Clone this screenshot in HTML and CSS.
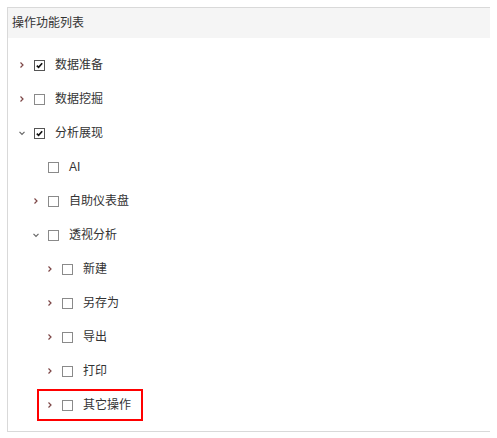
FILE: index.html
```html
<html lang="en">
<head>
    <meta charset="utf-8">
    <link rel="stylesheet" href="styles.css">
</head>
<body>
<div class="panel">
    <div class="panel-head">操作功能列表</div>
    <ul class="tree">
        <li class="row lv0"><span class="node">
            <svg class="arrow" viewBox="0 0 8 8"><path d="M2.5 1.5 L5 4 L2.5 6.5"/></svg>
            <span class="box checked"><svg viewBox="0 0 11 11"><path d="M2.2 5.6 L4.4 7.8 L8.8 2.8"/></svg></span>
            <span class="label">数据准备</span>
        </span></li>
        <li class="row lv0"><span class="node">
            <svg class="arrow" viewBox="0 0 8 8"><path d="M2.5 1.5 L5 4 L2.5 6.5"/></svg>
            <span class="box"></span>
            <span class="label">数据挖掘</span>
        </span></li>
        <li class="row lv0"><span class="node">
            <svg class="arrow open" viewBox="0 0 8 8"><path d="M1.5 2.8 L4 5.3 L6.5 2.8"/></svg>
            <span class="box checked"><svg viewBox="0 0 11 11"><path d="M2.2 5.6 L4.4 7.8 L8.8 2.8"/></svg></span>
            <span class="label">分析展现</span>
        </span></li>
        <li class="row lv1"><span class="node">
            <span class="arrow"></span>
            <span class="box"></span>
            <span class="label">AI</span>
        </span></li>
        <li class="row lv1"><span class="node">
            <svg class="arrow" viewBox="0 0 8 8"><path d="M2.5 1.5 L5 4 L2.5 6.5"/></svg>
            <span class="box"></span>
            <span class="label">自助仪表盘</span>
        </span></li>
        <li class="row lv1"><span class="node">
            <svg class="arrow open" viewBox="0 0 8 8"><path d="M1.5 2.8 L4 5.3 L6.5 2.8"/></svg>
            <span class="box"></span>
            <span class="label">透视分析</span>
        </span></li>
        <li class="row lv2"><span class="node">
            <svg class="arrow" viewBox="0 0 8 8"><path d="M2.5 1.5 L5 4 L2.5 6.5"/></svg>
            <span class="box"></span>
            <span class="label">新建</span>
        </span></li>
        <li class="row lv2"><span class="node">
            <svg class="arrow" viewBox="0 0 8 8"><path d="M2.5 1.5 L5 4 L2.5 6.5"/></svg>
            <span class="box"></span>
            <span class="label">另存为</span>
        </span></li>
        <li class="row lv2"><span class="node">
            <svg class="arrow" viewBox="0 0 8 8"><path d="M2.5 1.5 L5 4 L2.5 6.5"/></svg>
            <span class="box"></span>
            <span class="label">导出</span>
        </span></li>
        <li class="row lv2"><span class="node">
            <svg class="arrow" viewBox="0 0 8 8"><path d="M2.5 1.5 L5 4 L2.5 6.5"/></svg>
            <span class="box"></span>
            <span class="label">打印</span>
        </span></li>
        <li class="row lv2"><span class="node highlight">
            <svg class="arrow" viewBox="0 0 8 8"><path d="M2.5 1.5 L5 4 L2.5 6.5"/></svg>
            <span class="box"></span>
            <span class="label">其它操作</span>
        </span></li>
    </ul>
</div>
</body>
</html>
```

FILE: styles.css
```css
body {
    margin: 7px;
    background: #fff;
    font-family: "Liberation Sans", "Noto Sans CJK SC", sans-serif;
    font-size: 12px;
    color: #333;
}

.panel {
    box-sizing: border-box;
    width: 486px;
    height: 425px;
    border: 1px solid #d9d9d9;
}

.panel-head {
    height: 30px;
    line-height: 30px;
    padding-left: 4px;
    background-color: #f5f5f5;
    color: #333;
}

.tree {
    list-style: none;
    margin: 0;
    padding: 10px 0 0;
}

.row {
    height: 34px;
    display: flex;
    align-items: center;
}

.lv0 { padding-left: 10px; }
.lv1 { padding-left: 24px; }
.lv2 { padding-left: 38px; }

.node {
    display: inline-flex;
    align-items: center;
    height: 34px;
    box-sizing: border-box;
}

.node.highlight {
    height: 32px;
    margin: 1px 0 1px -9px;
    padding: 0 10px 0 7px;
    border: 2px solid #f00;
}

.arrow {
    width: 8px;
    height: 8px;
    margin-right: 8px;
    flex: none;
    fill: none;
    stroke: #7d4646;
    stroke-width: 1.2;
}

.arrow.open {
    stroke: #666;
}

.box {
    box-sizing: border-box;
    width: 11px;
    height: 11px;
    border: 1px solid #8a8a8a;
    background: #fff;
    margin-right: 10px;
    flex: none;
    display: flex;
}

.box svg {
    width: 9px;
    height: 9px;
    fill: none;
    stroke: #111;
    stroke-width: 2;
}

.box.checked {
    border-color: #555;
}

.label {
    line-height: 16px;
}
```
